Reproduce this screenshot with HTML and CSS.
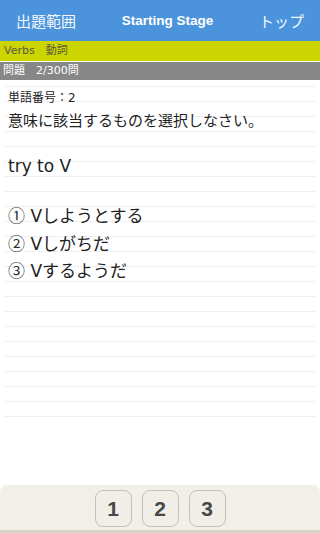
FILE: index.html
```html
<!DOCTYPE html>
<html lang="ja">
<head>
<meta charset="utf-8">
<title>Starting Stage</title>
<link rel="stylesheet" href="styles.css">
</head>
<body>
<div class="app">
  <header class="nav">
    <span class="nav-btn">出題範囲</span>
    <span class="nav-title">Starting Stage</span>
    <span class="nav-btn">トップ</span>
  </header>
  <div class="cat">Verbs　動詞</div>
  <div class="count">問題　2/300問</div>
  <main class="content">
    <div class="sheet">
      <div class="num">単語番号：2</div>
      <div class="q">意味に該当するものを選択しなさい。</div>
      <div class="word">try to V</div>
      <ul class="opts">
        <li><span class="mark">①</span> Vしようとする</li>
        <li><span class="mark">②</span> Vしがちだ</li>
        <li><span class="mark">③</span> Vするようだ</li>
      </ul>
    </div>
  </main>
  <footer class="toolbar">
    <button class="ans">1</button>
    <button class="ans">2</button>
    <button class="ans">3</button>
  </footer>
</div>
</body>
</html>
```

FILE: styles.css
```css
html, body {
  margin: 0;
  padding: 0;
  background: #ffffff;
}
body {
  font-family: "DejaVu Sans", "Noto Sans CJK JP", sans-serif;
  color: #222222;
}
.app {
  width: 100%;
  height: 533px;
  display: flex;
  flex-direction: column;
  overflow: hidden;
}
.nav {
  height: 41px;
  flex: none;
  background: #4b94dc;
  display: flex;
  align-items: center;
  justify-content: space-between;
  padding: 0 16px 0 16px;
  box-sizing: border-box;
  color: #ffffff;
}
.nav-btn {
  font-family: "Noto Sans CJK JP", sans-serif;
  font-size: 15px;
  color: #f4f8fd;
}
.nav-title {
  font-family: "Liberation Sans", sans-serif;
  font-weight: bold;
  font-size: 13.5px;
}
.cat {
  height: 20px;
  flex: none;
  background: #ccd402;
  color: #5c5c3c;
  font-size: 11px;
  line-height: 20px;
  padding-left: 4px;
  border-bottom: 1px solid #ffffff;
}
.count {
  height: 18px;
  flex: none;
  background: #878787;
  color: #ffffff;
  font-size: 11px;
  line-height: 18px;
  padding-left: 3px;
}
.content {
  flex: 1;
}
.sheet {
  height: 337px;
  margin: 0 4px;
  padding-left: 4px;
  background-image: linear-gradient(to bottom, transparent 0, transparent 14px, #f0f0f0 14px, #f0f0f0 15px);
  background-size: 100% 15px;
  background-repeat: repeat-y;
  background-position: 0 -8px;
}
.num {
  font-size: 12px;
  line-height: 16px;
  padding-top: 10px;
}
.q {
  font-size: 15px;
  line-height: 20px;
  margin-top: 5px;
}
.word {
  font-size: 17px;
  line-height: 22px;
  margin-top: 24px;
}
.opts {
  list-style: none;
  margin: 25px 0 0 0;
  padding: 0;
  font-size: 17px;
  line-height: 26.5px;
}
.mark {
  font-family: "Noto Sans CJK JP", sans-serif;
  color: #333333;
}
.toolbar {
  height: 48px;
  flex: none;
  box-sizing: border-box;
  background: #f2efe9;
  border-radius: 7px 7px 0 0;
  border-bottom: 3px solid #d6d1c9;
  display: flex;
  justify-content: center;
  align-items: flex-start;
  gap: 10px;
  padding-top: 5px;
}
.ans {
  width: 37px;
  height: 37px;
  padding: 0;
  margin: 0;
  background: #f1eee8;
  border: 1px solid #c6c0b6;
  border-radius: 8px;
  font-family: "Liberation Sans", sans-serif;
  font-weight: bold;
  font-size: 21px;
  color: #474747;
}
```
